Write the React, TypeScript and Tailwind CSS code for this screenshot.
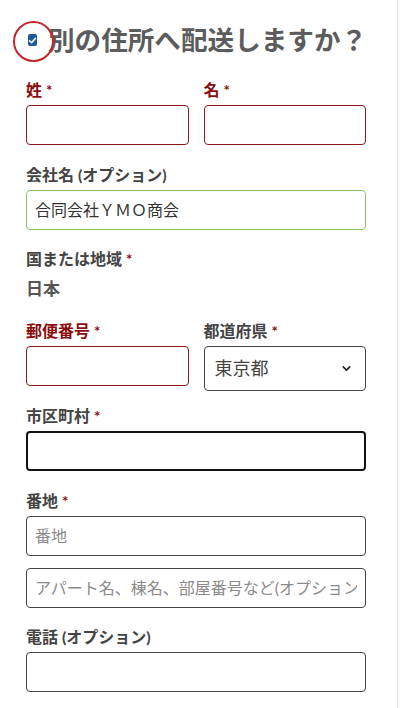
import { ChevronDown } from "lucide-react";

const font = { fontFamily: '"Lato", "Noto Sans CJK JP", sans-serif' };

function Label({ text, required, error }: { text: string; required?: boolean; error?: boolean }) {
  return (
    <div
      className={
        "h-5 leading-5 text-[16px] font-bold mb-[5px] whitespace-nowrap " +
        (error ? "text-[#8b0e0e]" : "text-[#444444]")
      }
    >
      {text}
      {required && <span className="text-[#8b0e0e] ml-1 text-[15px]">*</span>}
    </div>
  );
}

function Input({
  border = "border-[#444444]",
  value,
  placeholder,
}: {
  border?: string;
  value?: string;
  placeholder?: string;
}) {
  return (
    <div className={"h-10 rounded-[4px] border bg-white px-[8px] flex items-center " + border}>
      <div className="flex-1 overflow-hidden whitespace-nowrap text-[16px]">
        {value && <span className="text-[#333333]">{value}</span>}
        {placeholder && <span className="text-[#8a8a8a]">{placeholder}</span>}
      </div>
    </div>
  );
}

export default function App() {
  return (
    <div className="w-[400px] h-[708px] bg-white relative overflow-hidden" style={font}>
      <div className="absolute right-0 top-0 bottom-0 w-[3px] border-l border-[#e6e6e6] bg-[#fafafa]" />
      <div className="pl-[26px] pr-[34px]">
        {/* heading */}
        <div className="relative mt-[20px] h-10 flex items-center">
          <div className="ml-[2px] w-[12px] h-[12px] rounded-[2px] bg-[#1e5b94] flex items-center justify-center">
            <svg viewBox="0 0 12 12" className="w-[9px] h-[9px]">
              <path d="M2 6.3 L4.8 9 L10 3" fill="none" stroke="white" strokeWidth="2" strokeLinecap="round" strokeLinejoin="round" />
            </svg>
          </div>
          <h2 className="ml-[11px] text-[26.6px] leading-10 font-bold text-[#5c5c5c] whitespace-nowrap">
            別の住所へ配送しますか？
          </h2>
          <div className="absolute left-[-13px] top-[1px] w-[41px] h-[41px] rounded-full border-[2.5px] border-[#c4262e]" />
        </div>

        {/* name row */}
        <div className="mt-5 grid grid-cols-2 gap-x-[15px]">
          <div>
            <Label text="姓" required error />
            <Input border="border-[#8b1a1a]" />
          </div>
          <div>
            <Label text="名" required error />
            <Input border="border-[#8b1a1a]" />
          </div>
        </div>

        <div className="mt-5">
          <Label text="会社名 (オプション)" />
          <Input border="border-[#86c05f]" value="合同会社ＹＭＯ商会" />
        </div>

        <div className="mt-[19px]">
          <Label text="国または地域" required />
          <div className="h-5 leading-5 text-[17px] font-bold text-[#555555] mt-[10px]">日本</div>
        </div>

        <div className="mt-[22px] grid grid-cols-2 gap-x-[15px] items-start">
          <div>
            <Label text="郵便番号" required error />
            <Input border="border-[#8b1a1a]" />
          </div>
          <div>
            <Label text="都道府県" required />
            <div className="h-[45px] rounded-[4px] border border-[#444444] px-[10px] flex items-center justify-between">
              <span className="text-[18px] text-[#444444]">東京都</span>
              <ChevronDown className="w-[13px] h-[13px] text-[#222222] mr-[2px]" strokeWidth={3} />
            </div>
          </div>
        </div>

        <div className="mt-[15px]">
          <Label text="市区町村" required />
          <div className="h-10 rounded-[4px] border-2 border-[#111111] bg-white" />
        </div>

        <div className="mt-5">
          <Label text="番地" required />
          <Input placeholder="番地" />
          <div className="mt-3">
            <Input placeholder="アパート名、棟名、部屋番号など(オプション)" />
          </div>
        </div>

        <div className="mt-[19px]">
          <Label text="電話 (オプション)" />
          <Input />
        </div>
      </div>
    </div>
  );
}
